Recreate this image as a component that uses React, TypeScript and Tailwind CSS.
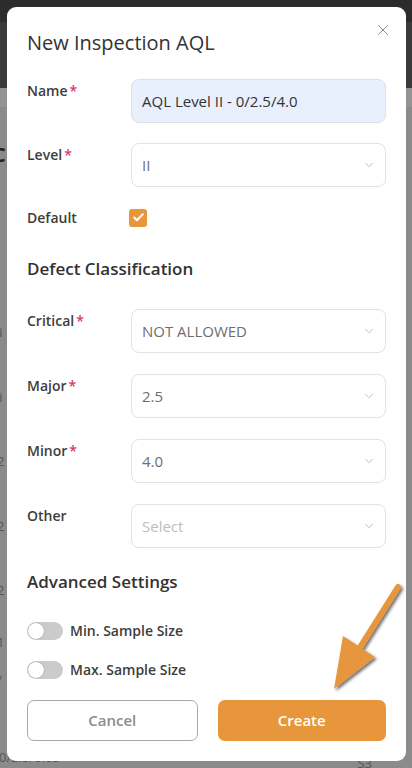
import { X, ChevronDown, Check } from "lucide-react";

const font = { fontFamily: '"Open Sans", "Liberation Sans", sans-serif' };

function Req() {
  return <span className="text-[#d63a6a] ml-[2px]">*</span>;
}

function Row({ label, required, children }: { label: string; required?: boolean; children: React.ReactNode }) {
  return (
    <div className="flex items-start">
      <div className="w-[104px] shrink-0 pt-[2px] text-[14px] leading-[20px] font-semibold text-[#3d3d3d]">
        {label}
        {required && <Req />}
      </div>
      <div className="flex-1">{children}</div>
    </div>
  );
}

function Select({ value, placeholder }: { value?: string; placeholder?: string }) {
  return (
    <div className="h-[44px] rounded-[8px] border border-[#e2e2e2] bg-white flex items-center justify-between pl-[10px] pr-[9px]">
      <span className={`text-[15px] ${value ? "text-[#6e6e6e]" : "text-[#bdbdbd]"}`}>{value ?? placeholder}</span>
      <ChevronDown className="w-[14px] h-[14px] text-[#b5b5b5]" strokeWidth={1.5} />
    </div>
  );
}

function Toggle({ label }: { label: string }) {
  return (
    <div className="flex items-center gap-[7px] h-[18px]">
      <div className="w-[36px] h-[18px] rounded-full bg-[#cbcbcb] flex items-center px-[1px]">
        <div className="w-[16px] h-[16px] rounded-full bg-white shadow-[0_0_1px_rgba(0,0,0,0.5)]" />
      </div>
      <span className="text-[14px] leading-[18px] font-semibold text-[#3d3d3d]">{label}</span>
    </div>
  );
}

export default function App() {
  return (
    <div className="relative w-[412px] h-[768px] overflow-hidden bg-[#8b8b8b]" style={font}>
      {/* dimmed page behind */}
      <div className="flex flex-col">
        <div className="h-[22px] bg-[#2c2c2c]" />
        <div className="h-[66px] bg-[#3a3a3a]" />
        <div className="h-[19px] bg-[#939393]" />
        <div className="h-[36px]" />
        <div className="h-[24px] text-[20px] font-bold text-[#222] leading-[24px] -ml-[7px]">C</div>
        <div className="h-[155px]" />
        <div className="text-[13px] text-[#555] leading-[20px] -ml-[4px]">li</div>
        <div className="h-[45px]" />
        <div className="text-[13px] text-[#555] leading-[20px] -ml-[4px]">li</div>
        <div className="h-[44px]" />
        <div className="text-[13px] text-[#555] leading-[20px] -ml-[3px]">2</div>
        <div className="h-[45px]" />
        <div className="text-[13px] text-[#555] leading-[20px] -ml-[3px]">2</div>
        <div className="h-[44px]" />
        <div className="text-[13px] text-[#555] leading-[20px] -ml-[3px]">2</div>
        <div className="h-[32px]" />
        <div className="text-[13px] text-[#555] leading-[20px] -ml-[3px]">1</div>
        <div className="h-[18px]" />
        <div className="text-[13px] text-[#555] leading-[20px] -ml-[3px]">/</div>
        <div className="h-[57px]" />
        <div className="flex justify-between text-[13px] text-[#555] leading-[20px] -ml-[1px] pr-[40px]">
          <span>0/2.5/0.65</span>
          <span className="pt-[6px]">S3</span>
        </div>
      </div>

      {/* modal */}
      <div className="absolute left-[7px] top-[7px] w-[399px] h-[754px] bg-white rounded-[9px] px-[20px] pt-[22px] pb-[20px] flex flex-col">
        <button className="absolute right-[14px] top-[14px] text-[#8a8a8a]">
          <X className="w-[18px] h-[18px]" strokeWidth={1.3} />
        </button>
        <h1 className="text-[20px] leading-[28px] text-[#333] font-medium">New Inspection AQL</h1>

        <div className="mt-[22px] flex flex-col gap-[20px]">
          <Row label="Name" required>
            <div className="h-[44px] rounded-[8px] border border-[#dcdfe6] bg-[#e8f0fe] flex items-center px-[10px] text-[15px] text-[#333]">
              AQL Level II - 0/2.5/4.0
            </div>
          </Row>
          <Row label="Level" required>
            <Select value="II" />
          </Row>
        </div>

        <div className="mt-[21px] flex items-center h-[19px]">
          <div className="w-[102px] text-[14px] font-semibold text-[#3d3d3d]">Default</div>
          <div className="w-[18px] h-[18px] rounded-[3px] bg-[#e8963c] flex items-center justify-center">
            <Check className="w-[13px] h-[13px] text-white" strokeWidth={3.5} />
          </div>
        </div>

        <h2 className="mt-[29px] text-[17px] leading-[26px] font-semibold text-[#333]">Defect Classification</h2>

        <div className="mt-[27px] flex flex-col gap-[21px]">
          <Row label="Critical" required>
            <Select value="NOT ALLOWED" />
          </Row>
          <Row label="Major" required>
            <Select value="2.5" />
          </Row>
          <Row label="Minor" required>
            <Select value="4.0" />
          </Row>
          <Row label="Other">
            <Select placeholder="Select" />
          </Row>
        </div>

        <h2 className="mt-[21px] text-[17px] leading-[26px] font-semibold text-[#333]">Advanced Settings</h2>

        <div className="mt-[27px] flex flex-col gap-[21px]">
          <Toggle label="Min. Sample Size" />
          <Toggle label="Max. Sample Size" />
        </div>

        <div className="mt-[21px] flex gap-[20px]">
          <button className="flex-1 h-[41px] rounded-[7px] border border-[#a9a9a9] bg-white text-[15px] font-semibold text-[#8c8c8c]">
            Cancel
          </button>
          <button className="flex-1 h-[41px] rounded-[7px] bg-[#e8963c] text-[15px] font-semibold text-white">
            Create
          </button>
        </div>
      </div>

      {/* annotation arrow */}
      <svg className="absolute left-0 top-0 pointer-events-none" width="412" height="768" viewBox="0 0 412 768">
        <defs>
          <filter id="sh" x="-20%" y="-20%" width="150%" height="150%">
            <feDropShadow dx="2" dy="2" stdDeviation="1.5" floodColor="#000" floodOpacity="0.55" />
          </filter>
        </defs>
        <g filter="url(#sh)" fill="#e8963c">
          <line x1="398" y1="587" x2="357" y2="652" stroke="#e8963c" strokeWidth="6" strokeLinecap="round" />
          <polygon points="334,689 343,636 375,657" />
        </g>
      </svg>
    </div>
  );
}
